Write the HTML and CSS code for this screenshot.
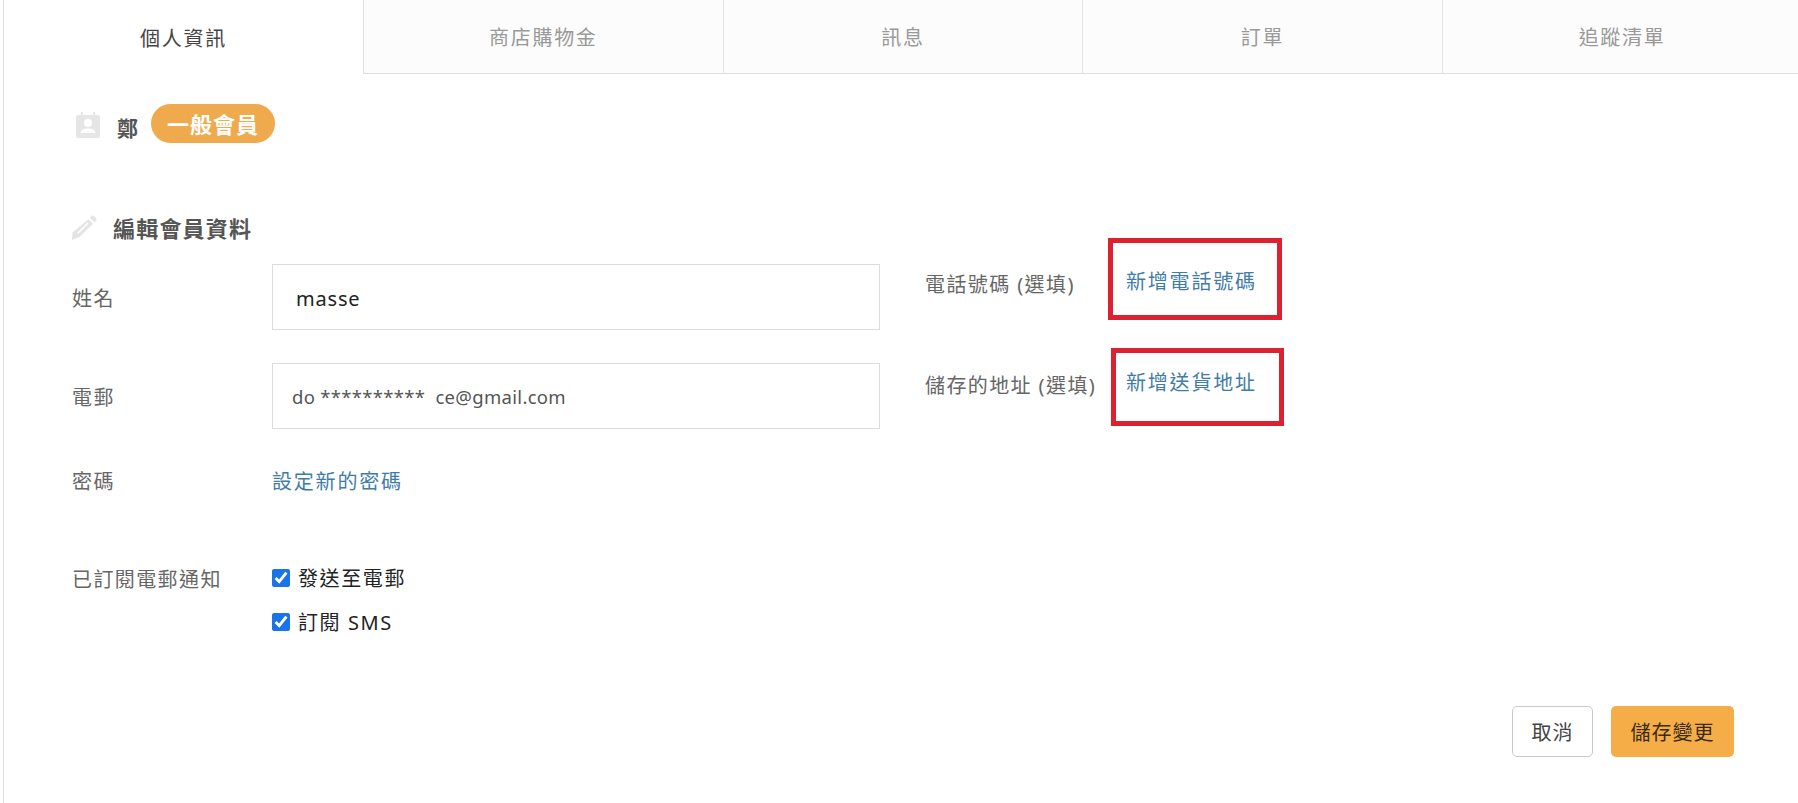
FILE: index.html
```html
<!DOCTYPE html>
<html lang="zh-Hant">
<head>
<meta charset="utf-8">
<title>個人資訊</title>
<link rel="stylesheet" href="styles.css">
</head>
<body>
<div class="page">
  <nav class="tabs">
    <div class="tab active">個人資訊</div>
    <div class="tab">商店購物金</div>
    <div class="tab">訊息</div>
    <div class="tab">訂單</div>
    <div class="tab">追蹤清單</div>
  </nav>
  <main class="content">
    <div class="member">
      <svg class="member-icon" viewBox="0 0 24 26" aria-hidden="true"><path fill="#e6e6e6" d="M2 3h3V0h2v3h10V0h2v3h3a2 2 0 0 1 2 2v19a2 2 0 0 1-2 2H2a2 2 0 0 1-2-2V5a2 2 0 0 1 2-2z"/><circle cx="12" cy="11" r="4" fill="#fff"/><path fill="#fff" d="M4.500 21c0-3 4-4.500 7.500-4.500s7.500 1.500 7.500 4.500z"/></svg>
      <span class="member-name">鄭</span>
      <span class="badge">一般會員</span>
    </div>
    <h2 class="section-title">
      <svg class="pencil" viewBox="0 0 25 25" aria-hidden="true"><path fill="#e4e4e4" d="M19.500 1.200a1.800 1.800 0 0 1 2.500 0l2 2a1.800 1.800 0 0 1 0 2.500l-1.500 1.500-4.500-4.500zM16.500 4.200L21 8.700 7.500 22 0 25l.5-7.500z"/><path fill="#fff" d="M15.500 7.500l1 1L6 19l-1-1z"/></svg>
      編輯會員資料
    </h2>
    <div class="columns">
      <div class="col-left">
        <div class="field">
          <label class="label">姓名</label>
          <div class="box name-box">masse</div>
        </div>
        <div class="field">
          <label class="label">電郵</label>
          <div class="box email-box">do **********&nbsp; ce@gmail.com</div>
        </div>
        <div class="field password">
          <label class="label">密碼</label>
          <a class="link">設定新的密碼</a>
        </div>
        <div class="field subscribe">
          <label class="label">已訂閱電郵通知</label>
          <div class="checks">
            <label class="check"><input type="checkbox" checked>發送至電郵</label>
            <label class="check"><input type="checkbox" checked>訂閱 SMS</label>
          </div>
        </div>
      </div>
      <div class="col-right">
        <div class="opt phone">
          <span class="opt-label">電話號碼 (選填)</span>
          <a class="link">新增電話號碼</a>
          <span class="mark mark-phone"></span>
        </div>
        <div class="opt address">
          <span class="opt-label">儲存的地址 (選填)</span>
          <a class="link">新增送貨地址</a>
          <span class="mark mark-address"></span>
        </div>
      </div>
    </div>
    <div class="actions">
      <button class="btn cancel">取消</button>
      <button class="btn save">儲存變更</button>
    </div>
  </main>
</div>
</body>
</html>
```
FILE: styles.css
```css
* { box-sizing: border-box; }
html, body { margin: 0; height: 100%; background: #fff; overflow: hidden; }
body {
  font-family: "Noto Sans", "Noto Sans CJK TC", sans-serif;
  color: #666;
  font-size: 20px;
  letter-spacing: 1.4px;
}
.page { height: 803px; margin-left: 3px; border-left: 1px solid #e2e2e2; overflow: hidden; }
.tabs { display: flex; height: 74px; }
.tab {
  flex: 0 0 359.6px;
  display: flex; align-items: center; justify-content: center;
  background: #fcfcfc;
  border-left: 1px solid #e4e4e4;
  border-bottom: 1px solid #dedede;
  color: #999;
  font-size: 20px;
  letter-spacing: 1.7px;
}
.tab.active { flex-basis: 359px; background: #fff; border-left: 0; border-bottom: 0; color: #444; }
.tab.active + .tab { border-left: 1px solid #dedede; }
.content { padding: 29px 0 0 68px; }
.member { display: flex; align-items: center; height: 40px; }
.member-icon { width: 24px; height: 26px; margin: 3px 0 0 4px; }
.member-name { margin: 8px 0 0 17px; font-weight: 700; color: #555; font-size: 21px; letter-spacing: 0; }
.badge {
  margin-left: 13px; height: 39px; width: 124px;
  border-radius: 20px; background: #eeaa4d; color: #fff;
  font-weight: 700; font-size: 22px; letter-spacing: 1px;
  display: flex; align-items: center; justify-content: center;
}
.section-title {
  display: flex; align-items: center;
  margin: 66px 0 0; height: 36px;
  font-size: 22px; font-weight: 700; color: #555; letter-spacing: 1.2px;
}
.pencil { width: 25px; height: 25px; margin-right: 16px; }
.columns { display: flex; margin-top: 19px; }
.col-left { width: 808px; }
.field { display: flex; align-items: center; }
.field + .field { margin-top: 33px; }
.label { width: 200px; flex: none; padding-top: 1px; }
.box {
  width: 608px; height: 66px;
  border: 1px solid #dcdcdc;
  display: flex; align-items: center;
}
.name-box { padding: 2px 0 0 23px; font-size: 20px; color: #222; letter-spacing: 0.8px; }
.email-box { padding-left: 19px; font-size: 18.500px; color: #555; letter-spacing: 0.3px; }
.link { color: #3f7ca6; font-size: 20px; letter-spacing: 1.8px; }
.field.password { margin-top: 34px; height: 34px; }
.field.subscribe { margin-top: 66px; align-items: flex-start; }
.checks { display: flex; flex-direction: column; gap: 16px; }
.check { display: flex; align-items: center; color: #222; height: 28px; letter-spacing: 1.6px; }
.check input { width: 18px; height: 18px; margin: 2px 8px 0 0; accent-color: #1a73e8; }
.col-right { padding-left: 45px; margin-top: -3px; }
.opt { position: relative; display: flex; align-items: center; height: 40px; }
.opt.address { margin-top: 61px; }
.opt-label { width: 201px; flex: none; padding-top: 5px; }
.opt .link { margin-top: -1px; }
.mark { position: absolute; border: 5px solid #dc2130; }
.mark-phone { left: 183px; top: -23px; width: 174px; height: 82px; }
.mark-address { left: 186px; top: -14px; width: 173px; height: 78px; }
.actions { display: flex; justify-content: flex-end; gap: 18px; margin: 71px 64px 0 0; }
.btn {
  height: 51px; border-radius: 5px;
  font: inherit; font-size: 20px; letter-spacing: 1px;
}
.cancel { width: 81px; background: #fff; border: 1px solid #c9c9c9; color: #444; }
.save { width: 123px; background: #f5ae47; border: 0; color: #3a2a12; }
```
